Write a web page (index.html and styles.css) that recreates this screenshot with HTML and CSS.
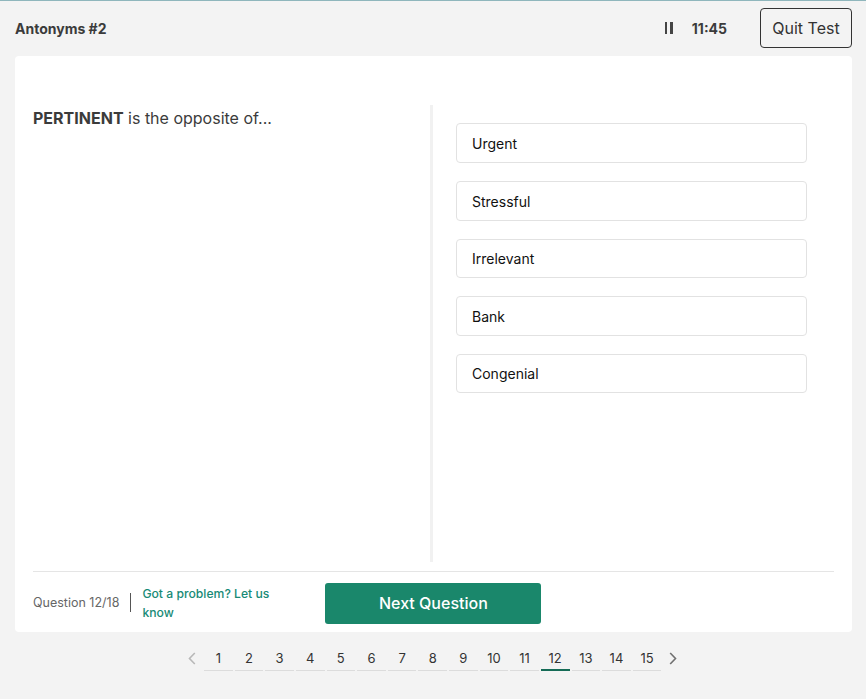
FILE: index.html
```html
<!DOCTYPE html>
<html>
<head>
<meta charset="utf-8">
<link rel="stylesheet" href="styles.css">
</head>
<body>
<div class="topline"></div>
<header class="header">
  <div class="title">Antonyms #2</div>
  <div class="right">
    <span class="pause"><span></span><span></span></span>
    <span class="time">11:45</span>
    <button class="quit">Quit Test</button>
  </div>
</header>
<main class="card">
  <div class="body">
    <div class="question"><b>PERTINENT</b> is the opposite of...</div>
    <div class="options">
      <div class="option">Urgent</div>
      <div class="option">Stressful</div>
      <div class="option">Irrelevant</div>
      <div class="option">Bank</div>
      <div class="option">Congenial</div>
    </div>
  </div>
  <div class="footer">
    <span class="count">Question 12/18</span>
    <span class="sep"></span>
    <a class="problem">Got a problem? Let us know</a>
    <button class="next">Next Question</button>
  </div>
</main>
<nav class="pager">
  <span class="chev left"><svg width="8" height="13" viewBox="0 0 8 13"><path d="M6.8 1 L1.5 6.5 L6.8 12" fill="none" stroke="#b8b8b8" stroke-width="1.6"/></svg></span>
  <span class="pg">1</span><span class="pg">2</span><span class="pg">3</span><span class="pg">4</span><span class="pg">5</span><span class="pg">6</span><span class="pg">7</span><span class="pg">8</span><span class="pg">9</span><span class="pg">10</span><span class="pg">11</span><span class="pg active">12</span><span class="pg">13</span><span class="pg">14</span><span class="pg">15</span>
  <span class="chev right"><svg width="8" height="13" viewBox="0 0 8 13"><path d="M1.2 1 L6.5 6.5 L1.2 12" fill="none" stroke="#707070" stroke-width="1.6"/></svg></span>
</nav>
</body>
</html>
```
FILE: styles.css
```css
html, body { margin: 0; padding: 0; }
body {
  background: #f3f3f3;
  font-family: Inter, "Noto Sans", sans-serif;
  color: #333;
  width: 866px;
  height: 699px;
  overflow: hidden;
}
.topline { height: 1px; background: #8fb6bc; }
.header {
  height: 55px;
  display: flex;
  align-items: center;
  justify-content: space-between;
  padding: 0 14px 0 15px;
}
.title { font-size: 14px; font-weight: 700; color: #3b3b3b; margin-bottom: 1px; }
.right { display: flex; align-items: center; }
.pause { display: inline-flex; gap: 3px; margin-right: 19px; margin-bottom: 1px; }
.pause span { width: 2.5px; height: 12px; background: #444; }
.time { font-size: 14px; font-weight: 700; color: #3b3b3b; margin-right: 33px; margin-bottom: 1px; }
.quit {
  font-family: inherit;
  font-size: 16px;
  color: #333;
  background: #f3f3f3;
  border: 1px solid #333;
  border-radius: 4px;
  height: 40px;
  width: 92px;
  padding: 0;
  margin-bottom: 1px;
}
.card {
  margin: 0 14px 0 15px;
  background: #fff;
  border-radius: 4px;
  padding: 49px 18px 0 18px;
  height: 527px;
}
.body { display: flex; height: 457px; }
.question {
  width: 397px;
  font-size: 16px;
  line-height: 24px;
  color: #3b3b3b;
  padding-top: 1px;
}
.question b { font-weight: 700; }
.options {
  border-left: 3px solid #f1f1f1;
  padding: 18px 0 0 23px;
  display: flex;
  flex-direction: column;
  gap: 18px;
}
.option {
  box-sizing: border-box;
  width: 351px;
  height: 40px;
  border: 1px solid #e2e2e2;
  border-radius: 4px;
  display: flex;
  align-items: center;
  padding-left: 15px;
  font-size: 14px;
  color: #111;
}
.options .option:nth-child(3), .options .option:nth-child(5) { height: 39px; }
.footer {
  margin-top: 9px;
  border-top: 1px solid #e5e5e5;
  height: 60px;
  display: flex;
  align-items: center;
}
.count { font-size: 12.5px; color: #666; }
.sep { width: 1px; height: 19px; background: #555; margin: 0 11px 0 11px; }
.problem {
  font-size: 12.2px;
  line-height: 19px;
  color: #178a76;
  font-weight: 500;
  width: 140px;
  margin-top: 1px;
}
.next {
  margin-left: 43px;
  width: 216px;
  height: 41px;
  background: #1a876b;
  color: #fff;
  border: none;
  border-radius: 3px;
  font-family: inherit;
  font-size: 16px;
  font-weight: 500;
  margin-top: 2px;
}
.pager {
  display: flex;
  align-items: flex-start;
  gap: 2px;
  margin-top: 15px;
  padding-left: 188px;
}
.pg {
  width: 28.64px;
  height: 23px;
  text-align: center;
  font-size: 13px;
  line-height: 22px;
  color: #333;
  border-bottom: 1px solid #dcdcdc;
  flex: none;
}
.pg.active { border-bottom: 2px solid #156b56; height: 22px; }
.chev { height: 23px; display: flex; align-items: center; }
.chev.left { margin-right: 6px; }
.chev.right { margin-left: 6px; }
```
